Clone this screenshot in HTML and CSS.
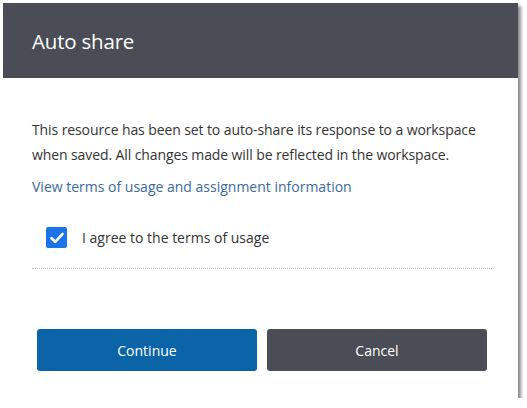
FILE: index.html
```html
<!DOCTYPE html>
<html>
<head>
<meta charset="utf-8">
<link rel="stylesheet" href="styles.css">
</head>
<body>
<div class="dialog">
  <div class="header"><h1 class="title">Auto share</h1></div>
  <div class="content">
    <p class="message">This resource has been set to auto-share its response to a workspace when saved. All changes made will be reflected in the workspace.</p>
    <a class="link" href="#">View terms of usage and assignment information</a>
    <label class="agree">
      <span class="check"><svg width="14" height="12" viewBox="0 0 14 12"><path d="M1.5 6.2 L5.2 9.8 L12.5 2" fill="none" stroke="#fff" stroke-width="2.6" stroke-linecap="round" stroke-linejoin="round"/></svg></span>
      <span class="agree-text">I agree to the terms of usage</span>
    </label>
    <div class="divider"></div>
  </div>
  <div class="actions">
    <button class="btn btn-primary">Continue</button>
    <button class="btn btn-secondary">Cancel</button>
  </div>
</div>
</body>
</html>
```
FILE: styles.css
```css
html, body {
  margin: 0;
  padding: 0;
  background: #ffffff;
}
body {
  font-family: "Open Sans", "Liberation Sans", sans-serif;
  color: #333333;
}
.dialog {
  margin: 3px 0 0 3px;
  width: 515px;
  height: 395px;
  background: #ffffff;
  box-shadow: 3px 3px 3px rgba(0, 0, 0, 0.45);
  display: flex;
  flex-direction: column;
}
.header {
  background: #4a4d55;
  height: 75px;
  display: flex;
  align-items: center;
  padding-left: 29px;
}
.title {
  margin: 0;
  color: #ffffff;
  font-weight: 400;
  font-size: 20.5px;
  letter-spacing: -0.2px;
}
.content {
  padding: 39px 26px 0 29px;
  display: flex;
  flex-direction: column;
}
.message {
  margin: 0;
  font-size: 14px;
  line-height: 25px;
  letter-spacing: -0.1px;
}
.link {
  margin-top: 10px;
  color: #3b6a9c;
  text-decoration: none;
  font-size: 14px;
  line-height: 20px;
}
.agree {
  display: flex;
  align-items: center;
  margin-top: 30px;
  padding-left: 14px;
  font-size: 14px;
}
.check {
  width: 21px;
  height: 21px;
  background: #1a73e8;
  border-radius: 2px;
  display: flex;
  align-items: center;
  justify-content: center;
}
.agree-text {
  margin-left: 15px;
}
.divider {
  margin-top: 20px;
  border-top: 1px dotted #c4c4c4;
}
.actions {
  display: flex;
  gap: 10px;
  padding: 60px 31px 0 34px;
}
.btn {
  flex: 1;
  height: 42px;
  border: none;
  border-radius: 3px;
  color: #ffffff;
  font-family: "Open Sans", "Liberation Sans", sans-serif;
  font-size: 14px;
}
.btn-primary {
  background: #0b64a8;
}
.btn-secondary {
  background: #4a4d55;
}
```
